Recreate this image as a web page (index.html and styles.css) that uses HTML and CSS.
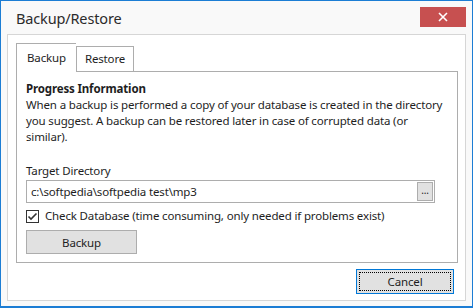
FILE: index.html
```html
<!DOCTYPE html>
<html lang="en">
<head>
  <meta charset="UTF-8" />
  <title>Backup/Restore</title>
  <link rel="stylesheet" href="styles.css">
</head>
<body>
  <div class="window">
    <div class="titlebar">
      <span class="title">Backup/Restore</span>
      <span class="close-btn">
        <svg width="10" height="10" viewBox="0 0 10 10"><path d="M1 1 L9 9 M9 1 L1 9" stroke="#fff" stroke-width="1.6" /></svg>
      </span>
    </div>

    <div class="panel">
      <div class="tabs">
        <span class="tab active">Backup</span>
        <span class="tab">Restore</span>
      </div>

      <div class="tab-page">
        <div class="section-title">Progress Information</div>
        <p class="info">When a backup is performed a copy of your database is created in the directory you suggest. A backup can be restored later in case of corrupted data (or similar).</p>

        <label class="field-label">Target Directory</label>
        <div class="path-input">
          <span class="path-text">c:\softpedia\softpedia test\mp3</span>
          <span class="browse-btn">...</span>
        </div>

        <div class="check-row">
          <span class="checkbox">
            <svg width="11" height="11" viewBox="0 0 11 11"><path d="M1.5 5.5 L4 8 L9.5 2.5" stroke="#333" stroke-width="1.6" fill="none" /></svg>
          </span>
          <span>Check Database (time consuming, only needed if problems exist)</span>
        </div>

        <span class="btn backup-btn">Backup</span>
      </div>

      <div class="footer">
        <span class="btn cancel-btn"><span class="focus">Cancel</span></span>
      </div>
    </div>
  </div>
</body>
</html>
```

FILE: styles.css
```css
* {
  box-sizing: border-box;
  margin: 0;
  padding: 0;
}

body {
  font-family: 'Noto Sans', 'Open Sans', sans-serif;
  font-size: 11.5px;
  letter-spacing: -0.15px;
  color: #1e1e1e;
}

.window {
  width: 473px;
  height: 308px;
  border: 1px solid #1c7dd4;
  border-bottom-width: 2px;
  background-color: #f9f9f9;
  display: flex;
  flex-direction: column;
}

.titlebar {
  height: 33px;
  display: flex;
  justify-content: space-between;
  align-items: flex-start;
  padding: 6px 6px 0 15px;
}

.title {
  font-size: 14.5px;
  color: #2b2b2b;
  line-height: 20px;
  padding-top: 1px;
}

.close-btn {
  width: 46px;
  height: 20px;
  background-color: #c75050;
  display: flex;
  align-items: center;
  justify-content: center;
}

.panel {
  margin: 0 6px 0 6px;
  height: 267px;
  border: 1px solid #d6d6d6;
  background-color: #fff;
  padding: 8px 7px 0 8px;
  display: flex;
  flex-direction: column;
}

.tabs {
  display: flex;
  align-items: flex-end;
  height: 28px;
  position: relative;
  z-index: 1;
}

.tab {
  border: 1px solid #adadad;
  border-bottom: none;
  height: 25px;
  padding: 0 8px;
  line-height: 24px;
  background-color: #fff;
}

.tab.active {
  height: 29px;
  margin-bottom: -1px;
  padding: 2px 10px 0 10px;
  border-right: none;
}

.tab-page {
  border: 1px solid #adadad;
  height: 192px;
  padding: 8px 9px 0 9px;
}

.section-title {
  font-weight: bold;
  line-height: 17px;
}

.info {
  line-height: 16px;
}

.field-label {
  display: block;
  margin-top: 17px;
  line-height: 17px;
}

.path-input {
  width: 409px;
  height: 23px;
  border: 1px solid #adadad;
  display: flex;
  align-items: center;
  justify-content: space-between;
  padding: 0 1px 0 4px;
  margin-top: 1px;
}

.browse-btn {
  width: 16px;
  height: 19px;
  border: 1px solid #adadad;
  background-color: #e1e1e1;
  font-size: 10px;
  line-height: 14px;
  text-align: center;
}

.check-row {
  display: flex;
  align-items: center;
  gap: 6px;
  margin-top: 5px;
  line-height: 16px;
}

.checkbox {
  width: 13px;
  height: 13px;
  border: 1px solid #333;
  display: flex;
  align-items: center;
  justify-content: center;
}

.btn {
  display: flex;
  align-items: center;
  justify-content: center;
  background-color: #e1e1e1;
  border: 1px solid #adadad;
}

.backup-btn {
  width: 111px;
  height: 24px;
  margin-top: 6px;
}

.footer {
  display: flex;
  justify-content: flex-end;
  padding: 6px 4px 0 0;
}

.cancel-btn {
  width: 98px;
  height: 25px;
  border-color: #0078d7;
  padding: 2px;
}

.focus {
  width: 100%;
  height: 100%;
  border: 1px dotted #000;
  display: flex;
  align-items: center;
  justify-content: center;
}
```
